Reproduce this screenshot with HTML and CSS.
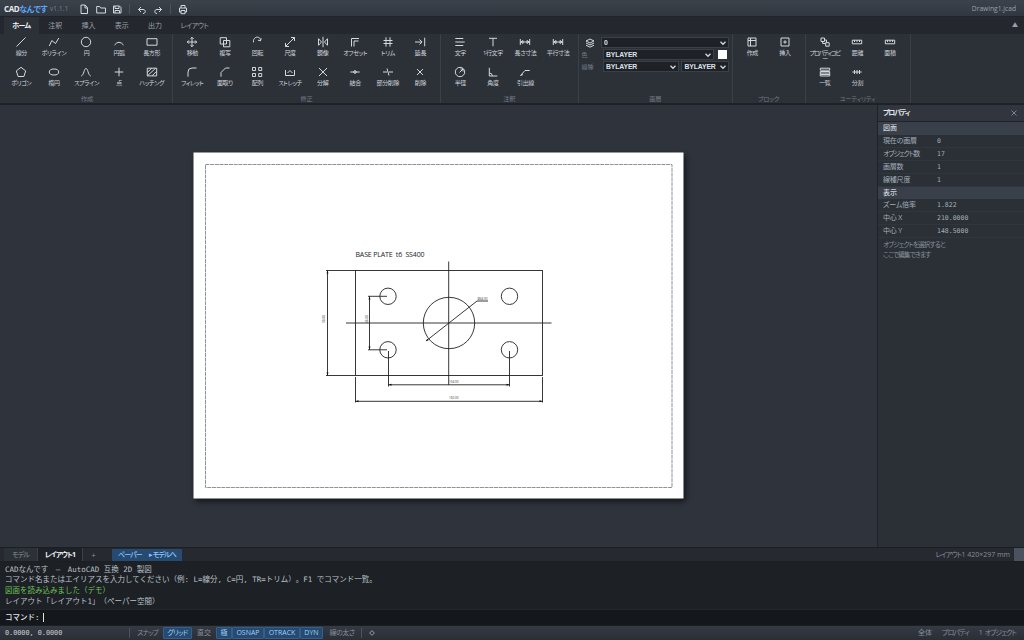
FILE: index.html
```html
<!DOCTYPE html>
<html lang="ja">
<head>
    <meta charset="UTF-8">
    <meta name="viewport" content="width=device-width, initial-scale=1.0">
    <title>CADなんです - Drawing1.jcad</title>
    <link rel="stylesheet" href="styles.css">
</head>
<body>
    <header class="titlebar">
        <div class="brand">CAD<span>なんです</span></div>
        <div class="version">v1.1.1</div>
        <div class="quick">
            <svg class="icon" viewBox="0 0 16 16"><path d="M5 4h4l2.500 2.500V12.500H5zM9 4v3h2.500"/></svg>
            <svg class="icon" viewBox="0 0 16 16"><path d="M3.700 12V5.500h3l1 1.500h4.800V12z"/></svg>
            <svg class="icon" viewBox="0 0 16 16"><path d="M4.500 5h6l1.500 1.500V12H4.500zM6 5v2.500h4V5M6 12V9.500h4.500V12"/></svg>
            <i class="sep"></i>
            <svg class="icon" viewBox="0 0 16 16"><path d="M7 6L4.500 8.500 7 11M4.500 8.500H9c3 0 3 4 0 4"/></svg>
            <svg class="icon" viewBox="0 0 16 16"><path d="M9 6l2.500 2.500L9 11M11.500 8.500H7c-3 0-3 4 0 4"/></svg>
            <i class="sep"></i>
            <svg class="icon" viewBox="0 0 16 16"><path d="M6 7V4.500h4V7M6 11H4.500V7h7v4H10M6 9.500h4v3.200H6z"/></svg>
        </div>
        <div class="filename">Drawing1.jcad</div>
    </header>

    <nav class="tabs">
        <div class="tab active">ホーム</div>
        <div class="tab">注釈</div>
        <div class="tab">挿入</div>
        <div class="tab">表示</div>
        <div class="tab">出力</div>
        <div class="tab wide">レイアウト</div>
        <div class="collapse">▲</div>
    </nav>

    <section class="ribbon">
        <div class="group draw">
            <div class="tools">
                <div class="tool"><svg class="icon" viewBox="0 0 16 16"><path d="M3.500 12.500l9-9"/></svg>線分</div>
                <div class="tool"><svg class="icon" viewBox="0 0 16 16"><path d="M3.300 12l2.500-5.500 3.700 3L12.800 4"/></svg>ポリライン</div>
                <div class="tool"><svg class="icon" viewBox="0 0 16 16"><circle cx="8" cy="8" r="4.700"/></svg>円</div>
                <div class="tool"><svg class="icon" viewBox="0 0 16 16"><path d="M3.500 11Q8 5.500 12.500 11"/></svg>円弧</div>
                <div class="tool"><svg class="icon" viewBox="0 0 16 16"><path d="M3 4.700h10v6.500H3z"/></svg>長方形</div>
                <div class="tool"><svg class="icon" viewBox="0 0 16 16"><path d="M8 3.300l4.700 3.600-1.800 5.600H5.100L3.300 6.900z"/></svg>ポリゴン</div>
                <div class="tool"><svg class="icon" viewBox="0 0 16 16"><ellipse cx="8" cy="8" rx="4.700" ry="3"/></svg>楕円</div>
                <div class="tool"><svg class="icon" viewBox="0 0 16 16"><path d="M3.300 12C6 11 6 4.500 8 4.500s2 6.500 4.700 7.500"/></svg>スプライン</div>
                <div class="tool"><svg class="icon" viewBox="0 0 16 16"><path d="M8 3.700v8.600M3.700 8h8.600"/></svg>点</div>
                <div class="tool"><svg class="icon" viewBox="0 0 16 16"><path d="M3.300 4.200h9.400v7.700H3.300zM3.300 8.500l4.500-4.300M3.500 11.800l8-7.500M8 11.800l4.700-4.500"/></svg>ハッチング</div>
            </div>
            <div class="group-name">作成</div>
        </div>

        <div class="group modify">
            <div class="tools">
                <div class="tool"><svg class="icon" viewBox="0 0 16 16"><path d="M8 3.300v9.400M3.300 8h9.400M6.400 4.900L8 3.300l1.600 1.600M6.400 11.100L8 12.700l1.600-1.600M4.900 6.400L3.300 8l1.600 1.600M11.100 6.400L12.700 8l-1.600 1.600"/></svg>移動</div>
                <div class="tool"><svg class="icon" viewBox="0 0 16 16"><path d="M3.200 3.700h6.300V10H3.200zM6.500 6.500h6.300v6.300H6.500z"/></svg>複写</div>
                <div class="tool"><svg class="icon" viewBox="0 0 16 16"><path d="M4.500 8.300C3.600 2 11.700 1.500 11.500 6.500M9 6.200l2.500.6.700-2.500"/></svg>回転</div>
                <div class="tool"><svg class="icon" viewBox="0 0 16 16"><path d="M3.500 12.500l9-9M9 3.500h3.500V7M3.500 9v3.500H7"/></svg>尺度</div>
                <div class="tool"><svg class="icon" viewBox="0 0 16 16"><path d="M8 2.800v10.400M3.500 4.700v6.600L6.500 8zM12.500 4.700v6.600L9.500 8z"/></svg>鏡像</div>
                <div class="tool"><svg class="icon" viewBox="0 0 16 16"><path d="M4.500 12.500V4.500H12M7 12.500V7h4.500"/></svg>オフセット</div>
                <div class="tool"><svg class="icon" viewBox="0 0 16 16"><path d="M6 3.300v9.400M10 3.300v9.400M3.500 6.500h9M3.500 9.500h9"/></svg>トリム</div>
                <div class="tool"><svg class="icon" viewBox="0 0 16 16"><path d="M3 8h7M7.500 5.500L10 8l-2.500 2.500M12.700 3.700v8.600"/></svg>延長</div>
                <div class="tool"><svg class="icon" viewBox="0 0 16 16"><path d="M4 12.700V8q0-4 4-4h4.500"/></svg>フィレット</div>
                <div class="tool"><svg class="icon" viewBox="0 0 16 16"><path d="M4 12.700V8.500L8.500 4h4"/></svg>面取り</div>
                <div class="tool"><svg class="icon" viewBox="0 0 16 16"><path d="M3.500 3.500h3v3h-3zM9.700 3.500h3v3h-3zM3.500 9.500h3v3h-3zM9.700 9.500h3v3h-3z"/></svg>配列</div>
                <div class="tool"><svg class="icon" viewBox="0 0 16 16"><path d="M3.500 6v5.500h9V6M5.500 9L8 6.500 10.500 9"/></svg>ストレッチ</div>
                <div class="tool"><svg class="icon" viewBox="0 0 16 16"><path d="M4 4l8 8M12 4l-8 8"/></svg>分解</div>
                <div class="tool"><svg class="icon" viewBox="0 0 16 16"><path d="M3.300 8h9.400"/><circle cx="8" cy="8" r="1.300"/></svg>結合</div>
                <div class="tool"><svg class="icon" viewBox="0 0 16 16"><path d="M3 8h4M9 8h4M7 4.500l2 7"/></svg>部分削除</div>
                <div class="tool"><svg class="icon" viewBox="0 0 16 16"><path d="M5 5l6 6M11 5l-6 6"/></svg>削除</div>
            </div>
            <div class="group-name">修正</div>
        </div>

        <div class="group note">
            <div class="tools">
                <div class="tool"><svg class="icon" viewBox="0 0 16 16"><path d="M3.300 4.500h8M3.300 8h9.400M3.300 11.500h8"/></svg>文字</div>
                <div class="tool"><svg class="icon" viewBox="0 0 16 16"><path d="M4 4.300h8M8 4.300v8"/></svg>1行文字</div>
                <div class="tool"><svg class="icon" viewBox="0 0 16 16"><path d="M3.300 5v6M12.700 5v6M3.300 8h9.400M6 6.500L4 8l2 1.500zM10 6.500L12 8l-2 1.500z"/></svg>長さ寸法</div>
                <div class="tool"><svg class="icon" viewBox="0 0 16 16"><path d="M3.300 5v6M12.700 5v6M3.300 8h9.400M6 6.500L4 8l2 1.500zM10 6.500L12 8l-2 1.500z"/></svg>平行寸法</div>
                <div class="tool"><svg class="icon" viewBox="0 0 16 16"><circle cx="8" cy="8" r="4.700"/><path d="M7.500 8.500l3.500-3.500M8.500 5H11v2.500"/></svg>半径</div>
                <div class="tool"><svg class="icon" viewBox="0 0 16 16"><path d="M4.300 3.800V12h8M4.300 9q3 0 3 3"/></svg>角度</div>
                <div class="tool"><svg class="icon" viewBox="0 0 16 16"><path d="M3.500 11.500L8 6.500h4.700M3.500 11.500l2.500-1"/></svg>引出線</div>
            </div>
            <div class="group-name">注釈</div>
        </div>

        <div class="group layer">
            <div class="layer-form">
                <div class="field">
                    <svg class="icon" viewBox="0 0 16 16"><path d="M8 4l4 2-4 2-4-2zM4 8l4 2 4-2M4 10.200l4 2 4-2"/></svg>
                    <div class="select layer-name">0<svg viewBox="0 0 8 8"><path d="M1.500 2.800L4 5.300l2.500-2.500"/></svg></div>
                </div>
                <div class="field">
                    <label>色</label>
                    <div class="select">BYLAYER<svg viewBox="0 0 8 8"><path d="M1.500 2.800L4 5.300l2.500-2.500"/></svg></div>
                    <i class="swatch"></i>
                </div>
                <div class="field">
                    <label>線種</label>
                    <div class="select">BYLAYER<svg viewBox="0 0 8 8"><path d="M1.500 2.800L4 5.300l2.500-2.500"/></svg></div>
                    <div class="select weight">BYLAYER<svg viewBox="0 0 8 8"><path d="M1.500 2.800L4 5.300l2.500-2.500"/></svg></div>
                </div>
            </div>
            <div class="group-name">画層</div>
        </div>

        <div class="group block">
            <div class="tools">
                <div class="tool"><svg class="icon" viewBox="0 0 16 16"><path d="M4 4h8v8H4zM4 6.500h8M6.500 4v8"/></svg>作成</div>
                <div class="tool"><svg class="icon" viewBox="0 0 16 16"><path d="M4 4h8v8H4zM8 6.300v3.400M6.300 8h3.400"/></svg>挿入</div>
            </div>
            <div class="group-name">ブロック</div>
        </div>

        <div class="group utility">
            <div class="tools">
                <div class="tool long"><svg class="icon" viewBox="0 0 16 16"><path d="M4 4h3.500v3.500H4zM8.700 8.700h3.500v3.500H8.700zM7.500 6h2v2.700M5.700 7.500v2h3"/></svg>プロパティコピ<br>ー</div>
                <div class="tool"><svg class="icon" viewBox="0 0 16 16"><path d="M3.300 6.200h9.400v3.600H3.300zM5.500 6.200V8M8 6.200V8M10.500 6.200V8"/></svg>距離</div>
                <div class="tool"><svg class="icon" viewBox="0 0 16 16"><path d="M3.300 6.200h9.400v3.600H3.300zM5.500 6.200V8M8 6.200V8M10.500 6.200V8"/></svg>面積</div>
                <div class="tool"><svg class="icon" viewBox="0 0 16 16"><path d="M3.300 4.200h9.400v2H3.300zM3.300 12h9.400V7.500H3.300zM3.300 9h9.400M3.300 10.500h9.400"/></svg>一覧</div>
                <div class="tool"><svg class="icon" viewBox="0 0 16 16"><path d="M3.300 8h9.400M5.500 6v4M8 6v4M10.500 6v4"/></svg>分割</div>
            </div>
            <div class="group-name">ユーティリティ</div>
        </div>
    </section>

    <main class="workspace">
        <svg class="canvas" viewBox="0 105 877 442">
            <rect class="paper" x="193.500" y="152.500" width="490" height="346"/>
            <rect class="margin" x="205.500" y="164.500" width="466.500" height="323"/>
            <g class="plate">
                <rect x="355.500" y="270.500" width="187" height="105"/>
                <circle cx="388" cy="296.300" r="8.200"/>
                <circle cx="509.500" cy="296.300" r="8.200"/>
                <circle cx="388" cy="349.800" r="8.200"/>
                <circle cx="509.500" cy="349.800" r="8.200"/>
                <circle cx="449" cy="323" r="25.700"/>
                <path d="M448.700 261.500V385M346 323H551.500"/>
                <path d="M326 270.500H355M326 375.500H355M327.500 270.500V375.500"/>
                <path d="M368 296.300H387M368 349.800H387M369.500 296.300V349.800"/>
                <path d="M388.500 351V386.500M509.500 351V386.500M388.500 384.800H509.500"/>
                <path d="M355.500 377V402.500M542.500 377V402.500M355.500 401.300H542.500"/>
                <path d="M426 341L477 301H488"/>
            </g>
            <path class="arrow" d="M327.500 270.500l-1 3h2zM327.500 375.500l-1-3h2zM369.500 296.500l-1 3h2zM369.500 349.500l-1-3h2zM388.500 384.800l3-1v2zM509.500 384.800l-3-1v2zM355.500 401.300l3-1v2zM542.500 401.300l-3-1v2zM426 341l2.500-.8-1.200-1.500z"/>
            <text class="caption" x="355.500" y="256.800" textLength="69" xml:space="preserve">BASE PLATE  t6  SS400</text>
            <text class="dim" x="477.500" y="300">Ø44.00</text>
            <text class="dim" x="449" y="382.500">104.00</text>
            <text class="dim" x="449" y="399">160.00</text>
            <text class="dim" transform="translate(325 323) rotate(-90)">90.00</text>
            <text class="dim" transform="translate(367.500 323) rotate(-90)">46.00</text>
        </svg>
        <aside class="props">
            <div class="props-head">プロパティ<svg viewBox="0 0 8 8"><path d="M1.500 1.500l5 5M6.500 1.500l-5 5"/></svg></div>
            <div class="section">図面</div>
            <div class="prop"><span>現在の画層</span><b>0</b></div>
            <div class="prop"><span class="tight">オブジェクト数</span><b>17</b></div>
            <div class="prop"><span>画層数</span><b>1</b></div>
            <div class="prop"><span>線種尺度</span><b>1</b></div>
            <div class="section">表示</div>
            <div class="prop"><span>ズーム倍率</span><b>1.822</b></div>
            <div class="prop"><span>中心 X</span><b>210.0000</b></div>
            <div class="prop"><span>中心 Y</span><b>148.5000</b></div>
            <p class="hint">オブジェクトを選択すると<br>ここで編集できます</p>
        </aside>
    </main>

    <div class="layouts">
        <div class="sheet">モデル</div>
        <div class="sheet active">レイアウト1</div>
        <div class="add">+</div>
        <div class="space"><span>ペーパー</span><span>▸ モデルへ</span></div>
        <div class="sheet-size"><span class="tight">レイアウト</span>1 420×297 mm</div>
        <i class="corner"></i>
    </div>

    <div class="log">
        <div>CADなんです　—　AutoCAD 互換 2D 製図</div>
        <div>コマンド名またはエイリアスを入力してください（例: L=線分, C=円, TR=トリム）。F1 でコマンド一覧。</div>
        <div class="ok">図面を読み込みました（デモ）</div>
        <div>レイアウト「レイアウト1」（ペーパー空間）</div>
    </div>
    <div class="command">コマンド:<i class="caret"></i></div>

    <footer class="status">
        <div class="coords">0.0000, 0.0000</div>
        <i class="sep"></i>
        <div class="toggle snap">スナップ</div>
        <div class="toggle grid on">グリッド</div>
        <div class="toggle ortho">直交</div>
        <div class="toggle polar on">極</div>
        <div class="toggle osnap on">OSNAP</div>
        <div class="toggle otrack on">OTRACK</div>
        <div class="toggle dyn on">DYN</div>
        <div class="toggle lwt">線の太さ</div>
        <i class="sep"></i>
        <svg class="gear" viewBox="0 0 8 8"><circle cx="4" cy="4" r="1.800"/><path d="M4 1.300v1M4 5.700v1M1.300 4h1M5.700 4h1"/></svg>
        <div class="info"><span>全体</span><span class="tight">プロパティ</span><span>1 <span class="tight">オブジェクト</span></span></div>
    </footer>
</body>
</html>
```
FILE: styles.css
```css
* {
    box-sizing: border-box;
}

body {
    margin: 0;
    width: 1024px;
    height: 640px;
    display: flex;
    flex-direction: column;
    overflow: hidden;
    background: #2b3037;
    color: #cdd3db;
    font-family: "Open Sans", "Noto Sans CJK JP", sans-serif;
    font-feature-settings: "palt";
    font-size: 7px;
    line-height: 10px;
    white-space: nowrap;
}

.icon {
    width: 16px;
    height: 16px;
    flex: none;
}

svg {
    fill: none;
    stroke: #d3d9e0;
    stroke-width: 1;
}

.sep {
    width: 1px;
    height: 10px;
    background: #4b525c;
}

/* kana set narrower than the default */
.tight {
    letter-spacing: -0.9px;
}

/* title bar */
.titlebar {
    height: 17px;
    flex: none;
    display: flex;
    align-items: center;
    padding: 1px 8px 0 4px;
    background: linear-gradient(#3c424b, #32373f);
    border-bottom: 1px solid #20242a;
}

.brand {
    width: 46px;
    font-size: 8px;
    font-weight: bold;
    letter-spacing: -0.4px;
    color: #e6eaf0;
}

.brand span {
    color: #58a6ff;
}

.version {
    width: 26px;
    font-size: 6.300px;
    letter-spacing: 0.2px;
    color: #7b8592;
}

.quick {
    display: flex;
    align-items: center;
    gap: 0.5px;
}

.quick .sep {
    margin: 0 3.500px 0 3px;
}

.filename {
    margin-left: auto;
    font-size: 6.700px;
    color: #98a1ad;
}

/* ribbon tabs */
.tabs {
    height: 17px;
    flex: none;
    display: flex;
    padding-left: 4px;
    background: #24282e;
    line-height: 17px;
    color: #98a1ad;
}

.tab {
    width: 33.300px;
    text-align: center;
}

.tab.active {
    width: 34.500px;
    background: #2c3138;
    color: #f0f3f7;
    font-weight: bold;
    letter-spacing: -0.6px;
}

.tab.wide {
    width: 45.500px;
    letter-spacing: -0.5px;
}

.collapse {
    margin-left: auto;
    padding-right: 6px;
    font-size: 6px;
}

/* ribbon */
.ribbon {
    height: 71px;
    flex: none;
    display: flex;
    background: #2c3138;
    border-bottom: 2px solid #1e2227;
}

.group {
    flex: none;
    display: flex;
    flex-direction: column;
    border-right: 1px solid #3a4048;
    padding: 0 3px;
}

.draw { width: 173px; padding-left: 5px; }
.modify { width: 268px; }
.note { width: 137.500px; }
.layer { width: 154.500px; }
.block { width: 72.500px; }
.utility { width: 105px; }

.tools {
    height: 60px;
    flex: none;
    display: grid;
    grid-template-columns: repeat(5, 32.600px);
    grid-auto-rows: 30px;
}

.modify .tools {
    grid-template-columns: repeat(8, 32.600px);
}

.note .tools {
    grid-template-columns: repeat(4, 32.600px);
}

.utility .tools {
    grid-template-columns: repeat(3, 32.600px);
}

.tool {
    display: flex;
    flex-direction: column;
    align-items: center;
    font-size: 6px;
    line-height: 6px;
    letter-spacing: -0.35px;
    text-align: center;
}

.tool.long {
    letter-spacing: -1.1px;
}

.group-name {
    text-align: center;
    font-size: 6.200px;
    line-height: 10px;
    letter-spacing: -0.2px;
    color: #727b87;
}

.layer-form {
    height: 60px;
    flex: none;
    padding-top: 3px;
    display: flex;
    flex-direction: column;
    gap: 1px;
}

.field {
    height: 11px;
    display: flex;
    align-items: center;
    gap: 2px;
}

.field .icon {
    width: 16px;
    margin-right: 1px;
}

.field label {
    width: 19px;
    font-size: 6px;
    color: #727b87;
}

.select {
    flex: 1;
    height: 10.500px;
    display: flex;
    align-items: center;
    justify-content: space-between;
    padding: 0 1px 0 2.500px;
    background: #1e2227;
    border: 1px solid #3a4048;
    font-family: "Liberation Sans", sans-serif;
    font-weight: bold;
    font-size: 6.800px;
    letter-spacing: -0.1px;
    color: #dde2e9;
}

.select svg {
    width: 8px;
    height: 8px;
    stroke-width: 1.300;
}

.select.weight {
    flex: 0 0 48px;
}

.swatch {
    width: 9px;
    height: 9px;
    margin: 0 2px;
    background: #fff;
}

/* drawing area */
.workspace {
    flex: 1;
    min-height: 0;
    display: flex;
}

.canvas {
    width: 877px;
    height: 442px;
    flex: none;
    background: #2f343c;
}

.paper {
    fill: #fff;
    stroke: none;
    filter: drop-shadow(2px 3px 3px rgba(0, 0, 0, 0.6));
}

.margin {
    stroke: #8e929c;
    stroke-dasharray: 4 0.7;
    stroke-width: 1;
}

.plate {
    stroke: #222;
    stroke-width: 0.900;
}

.arrow {
    fill: #111;
    stroke: none;
}

.caption {
    fill: #222;
    stroke: none;
    font-size: 7px;
}

.dim {
    fill: #333;
    stroke: none;
    font-size: 3px;
}

/* property panel */
.props {
    flex: 1;
    border-left: 1px solid #1e2227;
    background: #2b3037;
}

.props-head {
    height: 17px;
    display: flex;
    align-items: center;
    justify-content: space-between;
    padding: 0 6px 0 5px;
    background: #31363e;
    border-bottom: 1px solid #20242a;
    font-weight: bold;
    letter-spacing: -1.2px;
    color: #e0e5eb;
}

.props-head svg {
    width: 8px;
    height: 8px;
    stroke: #98a1ad;
    stroke-width: 0.700;
}

.section {
    height: 12.500px;
    padding-left: 5px;
    background: #3a4049;
    line-height: 12px;
    font-weight: 500;
}

.prop {
    height: 13px;
    display: flex;
    padding-left: 5px;
    border-bottom: 1px solid #31363e;
    line-height: 12px;
    letter-spacing: -0.2px;
    color: #a3acb7;
}

.prop span {
    width: 54px;
}

.prop .tight {
    letter-spacing: -1.1px;
}

.prop b {
    font: 6.500px/13px "DejaVu Sans Mono", monospace;
    letter-spacing: 0;
}

.hint {
    margin: 1.500px 0 0 5px;
    font-size: 6.700px;
    letter-spacing: -0.9px;
    color: #858e9a;
}

/* layout tabs */
.layouts {
    height: 15px;
    flex: none;
    display: flex;
    align-items: center;
    padding-left: 4px;
    background: #262a30;
    border-top: 1px solid #1b1e23;
    border-bottom: 1px solid #1b1e23;
    line-height: 13px;
    color: #858e9a;
}

.sheet {
    width: 34px;
    height: 13px;
    background: #2c3138;
    border-right: 1px solid #3a4048;
    text-align: center;
    letter-spacing: -0.9px;
}

.sheet.active {
    width: 45px;
    background: #1e2227;
    color: #f0f3f7;
    font-weight: bold;
}

.add {
    width: 29px;
    padding-right: 8px;
    text-align: center;
    font-size: 8px;
}

.space {
    width: 70px;
    height: 12px;
    display: flex;
    justify-content: space-between;
    padding: 0 6px;
    background: #264a70;
    line-height: 12px;
    font-weight: 500;
    letter-spacing: -0.9px;
    color: #8fc8ff;
}

.sheet-size {
    margin-left: auto;
    margin-right: 4px;
}

.corner {
    width: 10px;
    height: 13px;
    background: #4b525f;
}

/* command line */
.log,
.command {
    font-family: "DejaVu Sans Mono", "Noto Sans CJK JP", monospace;
    font-feature-settings: normal;
    text-spacing-trim: space-all;
    font-size: 7.500px;
}

.log {
    height: 47px;
    flex: none;
    padding: 2.500px 5px 0;
    background: #1d2024;
    line-height: 10.900px;
    color: #b9c0c9;
}

.log .ok {
    color: #6cc35a;
}

.command {
    height: 16px;
    flex: none;
    display: flex;
    align-items: center;
    padding-left: 5px;
    background: #15181b;
    border-top: 1px solid #24282e;
    font-weight: 500;
    color: #e0e5eb;
}

.caret {
    width: 1px;
    height: 9px;
    margin-left: 3px;
    background: #e0e5eb;
}

/* status bar */
.status {
    height: 15px;
    flex: none;
    display: flex;
    align-items: center;
    padding: 0 8px 0 5px;
    background: linear-gradient(#353a43, #2a2e35);
    border-top: 1px solid #1b1e23;
    color: #858e9a;
}

.coords {
    width: 124px;
    font-family: "DejaVu Sans Mono", monospace;
    font-size: 6.800px;
    color: #cdd3db;
}

.toggle {
    height: 12px;
    line-height: 11px;
    text-align: center;
}

.toggle.on {
    background: #264a70;
    border: 1px solid #31608f;
    border-radius: 1px;
    line-height: 10px;
    color: #9fd0ff;
}

.snap { width: 33px; padding-left: 2px; letter-spacing: -1px; }
.grid { width: 29px; letter-spacing: -0.7px; }
.ortho { width: 24px; }
.polar { width: 16px; }
.osnap { width: 32px; }
.otrack { width: 36px; }
.dyn { width: 23px; }
.lwt { width: 38px; letter-spacing: -0.5px; }

.gear {
    width: 8px;
    height: 8px;
    margin-left: 6px;
    stroke: #98a1ad;
    stroke-width: 0.700;
}

.info {
    margin-left: auto;
    display: flex;
    gap: 10px;
}
```
